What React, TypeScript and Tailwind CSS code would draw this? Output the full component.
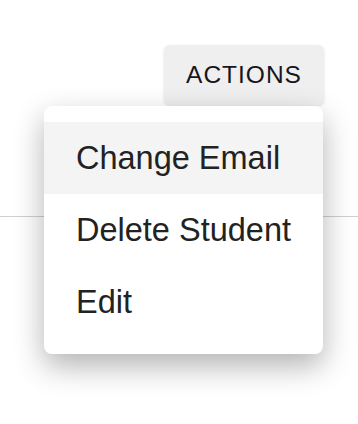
export default function App() {
  const items = ["Change Email", "Delete Student", "Edit"];

  return (
    <div className="relative h-[424px] w-[358px] overflow-hidden bg-white font-['Liberation_Sans',Arial,sans-serif]">
      <div className="flex justify-end pt-[45px] pr-[34px]">
        <button className="flex h-[60px] w-[160px] items-center justify-center rounded-[6px] bg-[#efefef] text-[24.5px] tracking-[1px] text-[#16161d] shadow-[0_1px_3px_rgba(0,0,0,0.12)]">
          ACTIONS
        </button>
      </div>

      <div className="mt-[111px] h-px w-full bg-[#d0d0d0]" />

      <div className="absolute left-[44px] top-[106px] w-[279px] rounded-lg bg-white py-4 shadow-[0_12px_30px_rgba(0,0,0,0.3)]">
        {items.map((item, i) => (
          <div
            key={item}
            className={
              "flex h-[72px] items-center pl-[32px] text-[32.5px] text-[#222] " +
              (i === 0 ? "bg-[#f4f4f4]" : "")
            }
          >
            {item}
          </div>
        ))}
      </div>
    </div>
  );
}
